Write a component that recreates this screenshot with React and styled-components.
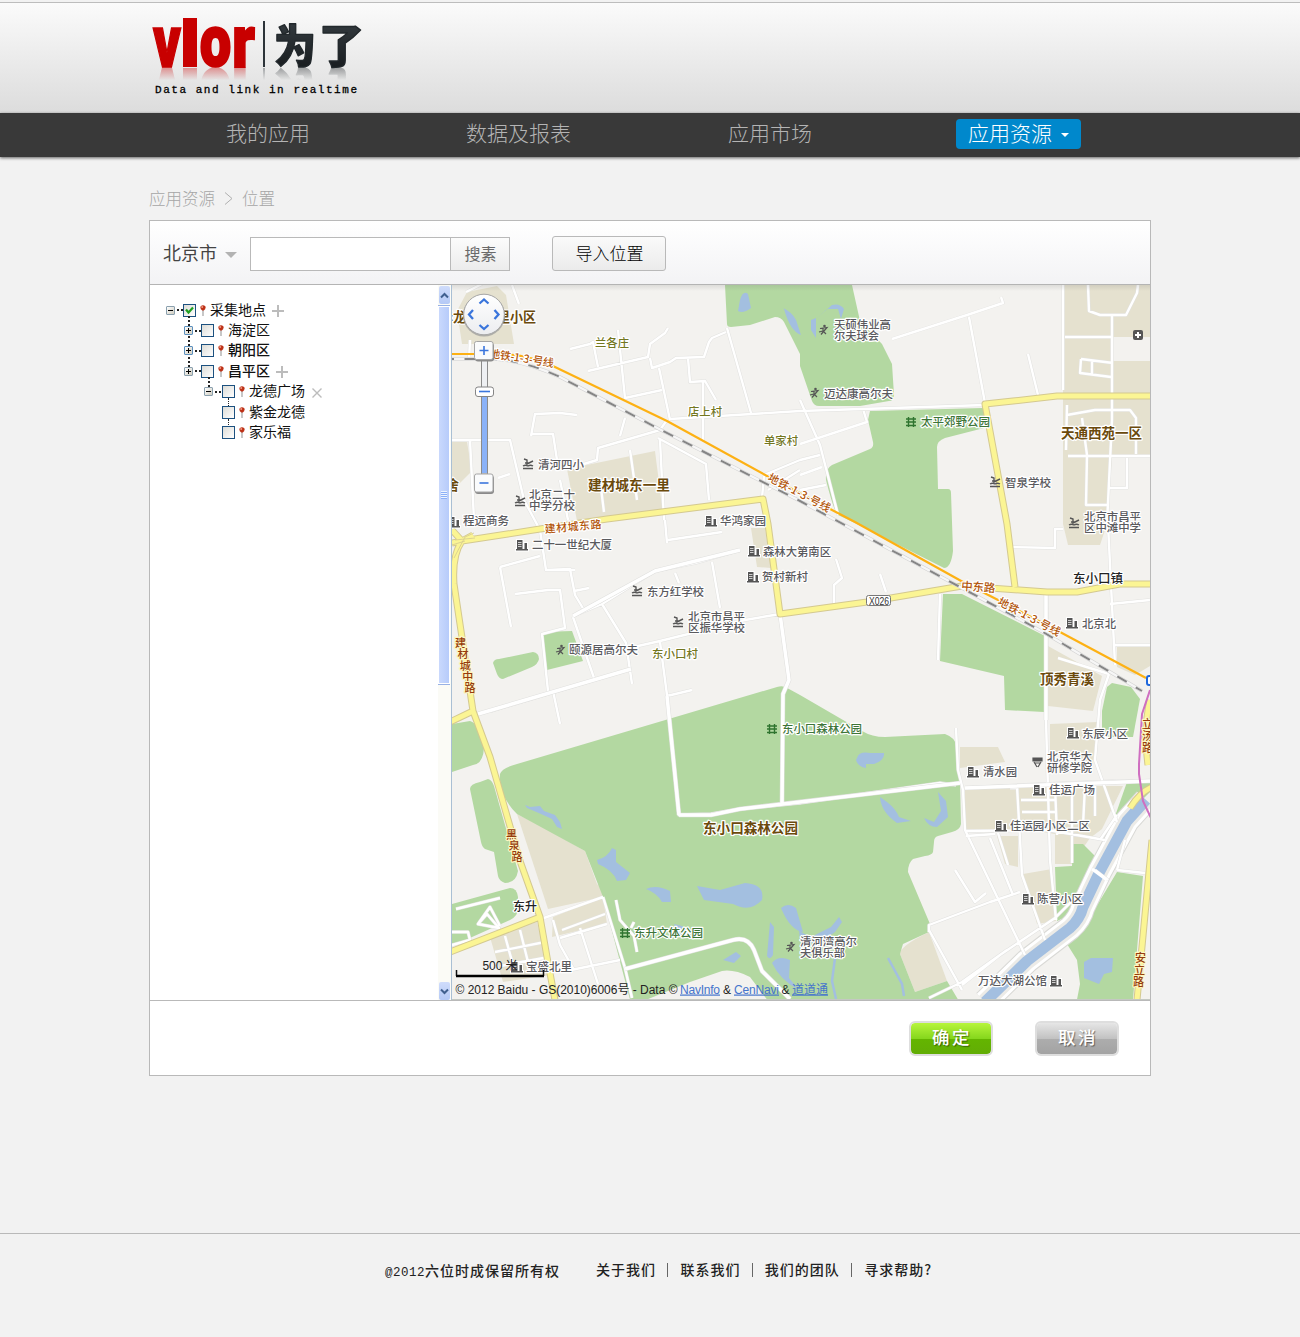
import React from 'react';
import styled, { createGlobalStyle } from 'styled-components';

const cjk = '"Noto Sans CJK SC", sans-serif';
const mono = '"Liberation Mono", "Noto Sans CJK SC", monospace';

const Global = createGlobalStyle`
  * { box-sizing: border-box; }
  body { margin: 0; background: #f2f2f2; font-family: ${cjk}; color: #222; }
`;

const Page = styled.div`
  width: 1300px;
  height: 1337px;
  display: flex;
  flex-direction: column;
  background: #f2f2f2;
  overflow: hidden;
`;
const Header = styled.header`
  height: 113px;
  flex: none;
  border-top: 2px solid #f2f2f2;
  background: linear-gradient(#fbfbfb, #dcdcdc);
  box-shadow: inset 0 1px 0 #bdbdbd;
  padding: 16px 149px 0;
`;
const Mark = styled.svg`
  display: block;
  overflow: visible;
  -webkit-box-reflect: below -1px linear-gradient(transparent 74%, rgba(0, 0, 0, 0.4));
`;
const Tagline = styled.p`
  margin: 15px 0 0 6px;
  font: 400 11px/14px ${mono};
  letter-spacing: 1.54px;
  color: #000;
  -webkit-text-stroke: 0.3px #000;
`;
const Nav = styled.nav`
  height: 44px;
  flex: none;
  background: #393939;
  box-shadow: 0 1px 3px rgba(0, 0, 0, 0.6);
  padding: 6px 0 0 226px;
  display: grid;
  grid-template-columns: 240px 262px 228px 125px;
  align-items: start;
`;
const NavItem = styled.a`
  font-size: 21px;
  line-height: 27px;
  height: 30px;
  font-weight: 300;
  white-space: nowrap;
  display: flex;
  align-items: center;
  color: ${(p) => (p.$active ? '#fff' : '#b4b4b4')};
  background: ${(p) => (p.$active ? '#0088cc' : 'transparent')};
  border-radius: 4px;
  padding: 0 0 3px ${(p) => (p.$active ? 12 : 0)}px;
`;
const Caret = styled.i`
  border: ${(p) => p.$size}px solid transparent;
  border-top-color: ${(p) => p.$color};
  border-bottom: 0;
  margin: ${(p) => p.$margin};
`;
const Crumbs = styled.div`
  height: 63px;
  flex: none;
  padding: 28px 0 0 149px;
  display: flex;
  gap: 9px;
  font-size: 16.5px;
  line-height: 26px;
  font-weight: 300;
  color: #a6a6a6;
  svg { margin-top: 7px; }
`;
const Panel = styled.main`
  width: 1002px;
  height: 856px;
  flex: none;
  margin-left: 149px;
  border: 1px solid #b9b9b9;
  background: #fff;
  display: flex;
  flex-direction: column;
`;
const Toolbar = styled.div`
  height: 64px;
  flex: none;
  border-bottom: 1px solid #b4b4b4;
  background: linear-gradient(#fff, #f3f3f5);
  display: flex;
  align-items: flex-start;
  padding: 15px 0 0 13px;
`;
const City = styled.div`
  width: 87px;
  height: 34px;
  padding-bottom: 2px;
  display: flex;
  align-items: center;
  font-size: 18px;
  color: #444;
`;
const SearchInput = styled.input`
  width: 201px;
  height: 34px;
  margin-top: 1px;
  border: 1px solid #b9b9b9;
  background: #fff;
  outline: 0;
`;
const SearchButton = styled.button`
  width: 59px;
  height: 34px;
  margin-top: 1px;
  padding: 0 0 3px 1px;
  border: 1px solid #b9b9b9;
  border-left: 0;
  background: linear-gradient(#fcfcfc, #ececec);
  font: 400 16px/28px ${cjk};
  color: #6a6a6a;
`;
const ImportButton = styled.button`
  width: 114px;
  height: 35px;
  margin-left: 42px;
  padding: 0 0 2px 1px;
  border: 1px solid #b9b9b9;
  border-radius: 3px;
  background: linear-gradient(#fafafa, #ebebeb);
  font: 300 17px/28px ${cjk};
  color: #000;
`;
const Body = styled.div`
  height: 716px;
  flex: none;
  display: flex;
  border-bottom: 1px solid #b9b9b9;
`;
const Tree = styled.ul`
  width: 288px;
  margin: 0;
  padding: 15px 0 0 16px;
  list-style: none;
`;
const Row = styled.li`
  height: 20.4px;
  display: flex;
  align-items: center;
  padding-left: ${(p) => p.$indent}px;
  font-size: 14px;
  font-weight: ${(p) => (p.$strong ? 500 : 400)};
  line-height: 20px;
  color: #111;
`;
const Name = styled.span`
  padding-bottom: 3px;
`;
const Toggle = styled.span`
  width: 9px;
  height: 9px;
  flex: none;
  border: 1px solid ${(p) => (p.$blue ? '#5b8fbd' : '#8aa0ae')};
  border-radius: 1px;
  background: linear-gradient(#000, #000) center / 5px 1px no-repeat,
    ${(p) => (p.$open ? '' : 'linear-gradient(#000, #000) center / 1px 5px no-repeat,')}
    linear-gradient(135deg, #fff, #cfccc0);
`;
const Dots = styled.span`
  width: ${(p) => p.$w}px;
  height: 2px;
  flex: none;
  background: repeating-linear-gradient(90deg, transparent 0 2px, #222 2px 4px);
`;
const Check = styled.span`
  position: relative;
  width: 13px;
  height: 13px;
  flex: none;
  border: 1px solid #1c5180;
  background: linear-gradient(135deg, #dcdcd7, #fff);
  svg { display: block; }
  &::after {
    content: '';
    display: ${(p) => (p.$line ? 'block' : 'none')};
    position: absolute;
    left: 5px;
    top: 12px;
    height: ${(p) => p.$line}px;
    border-left: 1px dotted #222;
  }
`;
const Pin = styled.svg`
  margin: 0 4px 0 4px;
  flex: none;
`;
const Action = styled.svg`
  margin: 2px 0 0 6px;
`;
const Scrollbar = styled.div`
  width: 14px;
  border-right: 1px solid #a9bfd4;
  background: #fbfbf6;
  display: flex;
  flex-direction: column;
  align-items: center;
  padding: 1px 1px 0 0;
`;
const ScrollEnd = styled.div`
  width: 11px;
  height: 18px;
  border-radius: 2px;
  background: linear-gradient(#cfdcfb, #b4c9f6);
  display: flex;
  align-items: center;
  justify-content: center;
  svg { transform: ${(p) => (p.$down ? 'rotate(180deg)' : 'none')}; }
`;
const Thumb = styled.div`
  width: 12px;
  height: 380px;
  margin: 1px 0 auto;
  border: 1px solid #98b1e4;
  border-width: 1px 0;
  box-shadow: inset 0 0 0 1px #fff;
  background: linear-gradient(90deg, #cbdafd, #b5cafa);
  display: flex;
  align-items: center;
  justify-content: center;
`;
const Grip = styled.i`
  width: 6px;
  height: 8px;
  background: repeating-linear-gradient(#eef4fe 0 1px, #8cb0f8 1px 2px);
`;
const MapView = styled.svg`
  display: block;
  width: 698px;
  height: 715px;
  font-family: ${cjk};
`;
const Actions = styled.div`
  flex: 1;
  display: flex;
  justify-content: flex-end;
  gap: 42px;
  padding: 20px 31px 0 0;
`;
const Button = styled.button`
  width: 84px;
  height: 35px;
  padding: 0 0 4px 2px;
  border: 2px solid #dedede;
  border-radius: 6px;
  font: 500 17.5px/27px ${cjk};
  letter-spacing: 2.5px;
  color: #fff;
  text-shadow: 1px 1px 1px rgba(0, 0, 0, 0.45);
  background: padding-box ${(p) =>
    p.$primary
      ? 'linear-gradient(#b7f53c, #86d71d 50%, #64b500 51%, #62ad05)'
      : 'linear-gradient(#e6e6e6, #c2c2c2 50%, #adadad 51%, #a3a3a3)'};
`;
const Footer = styled.footer`
  margin-top: 157px;
  height: 104px;
  border-top: 1px solid #b9b9b9;
  display: flex;
  align-items: flex-start;
  padding: 25px 0 0 385px;
  font: 500 14px/20px ${cjk};
  letter-spacing: 1px;
  color: #222;
`;
const Copyright = styled.span`
  width: 211px;
  margin-top: 1px;
  white-space: nowrap;
`;
const Year = styled.span`
  font-family: ${mono};
  font-size: 12.5px;
  letter-spacing: 0.5px;
`;
const FooterLink = styled.a`
  & + &::before {
    content: '';
    display: inline-block;
    height: 14px;
    border-left: 1px solid #666;
    margin: 0 12px 0 11.4px;
    vertical-align: -2px;
  }
`;

function Logo() {
  return (
    <Mark width="230" height="50" viewBox="149 18 230 50">
      <defs>
        <linearGradient id="ink" x1="0" y1="0" x2="0" y2="1">
          <stop offset="0" stopColor="#3a4146" />
          <stop offset="1" stopColor="#14181b" />
        </linearGradient>
      </defs>
      <g fill="#c80000" stroke="#c80000" fontFamily="Roboto, sans-serif" fontWeight="900">
        <text x="153" y="66.5" fontSize="75" strokeWidth="1.6" textLength="28" lengthAdjust="spacingAndGlyphs">v</text>
        <rect x="183.500" y="18.500" width="13" height="48" />
        <text x="200" y="66" fontSize="72" strokeWidth="2.6" textLength="31" lengthAdjust="spacingAndGlyphs">o</text>
        <text x="232" y="66.500" fontSize="74" strokeWidth="1.8" textLength="23" lengthAdjust="spacingAndGlyphs">r</text>
      </g>
      <rect x="263" y="21" width="2" height="46" fill="#2d3439" />
      <g fill="url(#ink)" stroke="#22282c" strokeWidth="1.4" strokeLinejoin="round" fontFamily="Noto Sans CJK SC, sans-serif" fontWeight="900" fontSize="45">
        <text x="274" y="62.500" textLength="42" lengthAdjust="spacingAndGlyphs">为</text>
        <text x="319" y="62.500" textLength="45" lengthAdjust="spacingAndGlyphs">了</text>
      </g>
    </Mark>
  );
}

const parks = [
  'M725 285L727 324Q727 327 731 327L750 325L775 317Q781 317 784 322L800 354V366L812 401Q814 406 819 406H860L889 401Q894 401 894 395L892 364L882 344L860 321L852 285Z',
  'M870 411L983 408L988 427L945 438Q937 441 937 447L938 489H948Q951 489 951 493L953 551Q951 568 944 568L857 524L838 515Q834 512 826 480Q825 469 832 465L870 449Q874 447 873 442L868 420Z',
  'M943 594H962L1045 636L1044 712L1005 710L1004 676L940 661Z',
  'M1112 683L1131 687L1140 699L1133 737H1102V711L1107 687Z',
  'M542 632L572 631L583 661L547 670Z',
  'M493 663Q494 659 499 659L533 652Q539 653 539 659Q538 664 532 667L503 679Q499 679 497 674Z',
  'M517 764L777 687Q784 685 789 689L800 695L862 731Q872 737 885 737L945 734Q956 738 956 746L960 781L961 824Q960 830 952 832L938 836Q934 837 934 842L933 852Q932 855 925 856L913 859Q908 863 908 872L930 924L929 932L903 944L900 954L915 992L947 981L958 999.500H630L603 897L585 851L517 814Q498 795 500 774Q502 768 517 764Z',
  'M452 724L470 721Q475 722 478 730L484 748Q483 764 473 765L452 772Z',
  'M470 789Q470 784 480 782L488 779Q492 780 494 786L518 871Q516 883 505 883Q499 881 498 876L494 852L485 849Q482 847 481 842Z',
  'M452 904L510 888Q517 888 518 897V909Q518 916 510 920L452 946Z',
  'M1073 844H1083L1095 856V867L1073 914L1057 921L1055 867L1072 866Z',
  'M1117 872L1143 876L1133 999.500H1077L1080 984L1077 960L1067 944L1090 917Z',
  'M1150 782H1127L1113 822L1122 820L1150 792Z',
];
const blocks = [
  'M467 292L497 286L506 295L514 344H462L457 311Z',
  'M567 469L655 451L663 514L577 521Z',
  'M452 442H467L472 471L452 491Z',
  'M1063 285H1150V337H1113V361H1150V456H1112L1107 524L1100 545H1068L1063 524Z',
  'M751 528H765L771 568L757 567Z',
  'M1048 646L1102 676L1093 711L1048 706Z',
  'M1117 647H1150V666L1135 675L1117 667Z',
  'M1050 724L1097 722L1093 764L1050 750Z',
  'M960 747H998L1005 762L960 768Z',
  'M965 787H1017V829L965 830Z',
  'M1019 786H1123L1102 829L1090 838L1072 864H1055V834L1019 828Z',
  'M997 836H1018V867L1005 864Z',
  'M1023 874L1052 869L1056 921L1037 924Z',
  'M929 932L947 981L915 992L900 954Q900 946 929 932Z',
  'M517 814L543 827L585 851L597 884L603 889V897L548 909Z',
  'M553 917L603 897L607 924L577 931L552 937Z',
  'M490 937L537 922L551 975L503 982Z',
];
const waters = [
  'M740 300Q743 290 748 294L751 308Q743 314 738 311Z',
  'M783 308Q792 312 796 320L801 335Q790 331 784 309Z',
  'M817 318L832 305Q840 303 844 309L841 319L838 309L827 309Z',
  'M811 320L816 318L816 338L811 330Z',
  'M525 805L530 807L540 806L544 811L555 815L560 822L562 829L557 827L552 819L541 814L527 808Z',
  'M597 860Q608 857 612 848L616 850L616 862L630 873L626 880L617 881Q613 870 598 864Z',
  'M646 889Q656 884 670 891L671 902L662 902Q657 893 646 889Z',
  'M697 886L720 890L745 883Q765 884 762 900Q750 913 733 904L704 900Z',
  'M781 908Q788 902 796 908L803 932Q790 930 781 908Z',
  'M770 922L774 927L773 955Q770 961 767 956Z',
  'M723 960L736 952L741 956L734 963Z',
  'M674 924L682 926L693 934L680 936Z',
  'M772 963Q778 955 790 960L789 978L799 990Q780 980 772 963Z',
  'M799 930Q811 940 815 935L831 927L839 917L842 922L835 932L818 944L800 940Z',
  'M857 758Q859 751 870 753L884 753Q885 760 874 764H866V768Q858 767 856 760Z',
  'M880 797L887 802Q896 809 899 817L911 821L897 823Q881 812 880 797Z',
  'M924 818L934 822L941 811L938 792L946 801L948 817L937 827Q928 827 924 818Z',
  'M1084 962L1091 958L1113 958L1112 972L1104 974L1099 984L1084 978Z',
];
const streams = 'M835 958L832 981L836 999M888 958L902 984L904 996';
const thin =
  'M466 292L482 284M469 360L470 340M512 285L519 304M570 349L590 344L593 342L598 367M588 371L648 357L650 344L665 333L668 328M618 330L625 398L662 390M650 358L652 368L670 362L676 358L704 357L709 342L712 338L726 332M659 368L670 420M688 358L690 382L705 381L716 400M727 328L751 413M670 419L800 411L985 405M703 382V440M452 440L510 440L524 500L540 530L546 570L570 569L575 595L584 610M531 436L535 414L560 413L577 415M531 434L553 434L557 460M620 436L625 418M567 469L597 460L598 448L660 430L667 420M658 438L706 464L709 500M560 480L568 520M660 440L664 520M600 480L604 512M600 487L632 481M630 450L637 500M470 440L474 520M498 478L510 474M764 476L762 498M764 475L800 460M768 490L800 470M800 400L820 445L838 515M800 444L867 422L863 409M800 460L820 455M800 475L822 467M800 490L826 485M892 339L967 315L1003 303L1001 297M969 317L985 403M1028 354L1038 395M1063 285V390M1065 337H1113M1088 285L1089 311L1100 315H1126L1137 293L1138 285M1112 315V420L1107 524M1081 359L1113 363M1092 361V375M1081 359L1080 373L1111 377M1066 450L1067 405M1068 456H1150M1067 415L1095 410H1130L1136 418V454M1082 418L1087 455L1086 505H1107M1127 458V488H1109M500 567L540 556M500 567L511 627M515 594L548 590L560 590L565 628L542 634L548 691M575 570L548 570M574 591L589 588M573 616L602 604L655 571L695 563L740 550M573 617L594 678M602 604L626 643L632 684M636 654L638 646L660 641L745 620L780 614M675 573L679 583M712 562L720 608M668 540L722 532M665 520L667 543M491 711L631 669M553 691L560 724M660 642L667 695L679 815L711 814L740 809L800 803L940 783L956 785M667 696L692 690M780 614L789 680L783 694L782 804M836 559L842 578L834 585V604M880 574L886 592M940 594L938 660M956 728L958 770L963 790L965 830L1025 955M965 788L1020 785L1117 781H1150M1047 592L1046 720L1050 860L1056 920M1012 547L1055 548V529H1063M1108 524L1115 665M1115 645H1150M1110 604L1150 600M1058 658L1109 674M1109 674L1100 700L1095 760L1117 822M1017 786L1022 875L1045 940M965 831L1048 830L1105 840M998 833L1008 865M955 870L975 902L986 893M990 838L1013 895M966 836L995 834M929 932V925L990 902L1020 892M929 930L962 990M929 998L962 982L1007 950M962 985L1000 955L1055 918L1073 900M1017 788H1010M1021 800H1055M1022 812H1055M1055 786L1057 835M1072 787V863M1085 786L1083 825M1095 786V816M1100 840L1117 815M1095 870L1108 880M1117 870L1145 873M1125 840L1117 870M603 897L625 968L632 998M616 900L620 920L634 936L637 952M631 928L634 922M544 918L603 897M553 920L560 945L574 970M562 930L605 914M560 938L607 924M571 970L620 960M580 928L598 984M505 936L513 965M520 930L530 970M495 952L545 942M500 966L549 957M456 909L500 898M478 924L487 914L499 928L478 924L490 907L500 926M452 932L468 932L470 940L452 945';
const mainRoads =
  'M679 815H711L740 809L960 783M667 696L679 815M782 804L783 694L789 680L780 614M573 616L655 571L740 550M478 714L631 669M965 788L1150 781M1046 592L1046 720M625 969L733 940Q748 936 754 950L762 971L790 999';
const fatRoads =
  'M452 543L462 541L473 535M462 541Q452 555 454 584L473 711L490 757L520 861L540 917L547 957L555 1000M452 530L462 541L540 529L607 519L763 499L768 524L780 614L867 602L962 586L1047 592L1077 592L1120 584H1152M1152 396H1057L1013 401L985 404L1007 524L1015 587M450 722L473 711M450 952L540 917M1150 700Q1143 730 1148 765M1152 787Q1140 792 1130 808M1152 840L1137 1000';
const metro = 'M452 354H500Q530 355 555 367L667 421L767 476L855 522L963 582L1060 632L1146 678';
const rail = 'M452 359H495Q525 361 560 377L663 431L800 501L960 587L1043 632L1142 691';
const canal = 'M985 1002L1027 961L1070 928Q1080 919 1083 907L1100 871L1127 821L1146 800';

// [text, x, baseline, width, kind]
const labels = [
  ['华龙', 440, 322, 26, 'area'], ['里小区', 497, 322, 39, 'area'],
  ['兰各庄', 595, 347, 34, 'village'], ['店上村', 688, 416, 34, 'village'], ['单家村', 764, 445, 34, 'village'],
  ['天硕伟业高', 834, 329, 57, 'poi'], ['尔夫球会', 834, 340, 45, 'poi'],
  ['迈达康高尔夫', 824, 398, 69, 'poi'], ['太平郊野公园', 921, 426, 69, 'park'],
  ['天通西苑一区', 1061, 438, 81, 'area'], ['智泉学校', 1005, 487, 46, 'poi'],
  ['北京市昌平', 1084, 521, 57, 'poi'], ['区中滩中学', 1084, 532, 57, 'poi'],
  ['清河四小', 538, 469, 46, 'poi'], ['建材城东一里', 588, 490, 82, 'area'],
  ['北京二十', 529, 499, 46, 'poi'], ['中学分校', 529, 510, 46, 'poi'],
  ['程远商务', 463, 525, 46, 'poi'], ['华鸿家园', 720, 525, 46, 'poi'],
  ['二十一世纪大厦', 532, 549, 80, 'poi'], ['森林大第南区', 763, 556, 68, 'poi'],
  ['贺村新村', 762, 581, 46, 'poi'], ['东方红学校', 647, 596, 57, 'poi'],
  ['北京市昌平', 688, 621, 57, 'poi'], ['区振华学校', 688, 632, 57, 'poi'],
  ['颐源居高尔夫', 569, 654, 69, 'poi'], ['东小口村', 652, 658, 46, 'village'],
  ['东小口镇', 1073, 583, 50, 'town'], ['北京北', 1082, 628, 34, 'poi'], ['顶秀青溪', 1040, 684, 54, 'area'],
  ['东小口森林公园', 782, 733, 80, 'park'], ['东辰小区', 1082, 738, 46, 'poi'],
  ['北京华大', 1047, 761, 45, 'poi'], ['研修学院', 1047, 772, 45, 'poi'],
  ['清水园', 983, 776, 34, 'poi'], ['佳运广场', 1049, 794, 46, 'poi'], ['佳运园小区二区', 1010, 830, 80, 'poi'],
  ['东小口森林公园', 703, 833, 95, 'area'], ['陈营小区', 1037, 903, 46, 'poi'],
  ['东升', 513, 911, 24, 'town'], ['东升文体公园', 634, 937, 69, 'park'],
  ['清河湾高尔', 800, 946, 57, 'poi'], ['夫俱乐部', 800, 957, 45, 'poi'],
  ['万达大湖公馆', 978, 985, 69, 'poi'], ['宝盛北里', 526, 971, 46, 'poi'], ['舍', 447, 490, 12, 'area'],
];
const kinds = {
  area: ['#6b4a0c', 13.5, 700],
  village: ['#73771f', 11.5, 500],
  poi: ['#5a5a5e', 11.5, 500],
  park: ['#3d7538', 11.5, 500],
  town: ['#222', 12.5, 500],
};
const buildings = [[711, 521], [522, 545], [454, 522], [754, 551], [753, 577], [1072, 623], [1073, 733], [973, 772], [1039, 790], [1001, 826], [1028, 899], [1056, 981], [517, 967]];
const schools = [[528, 464], [520, 501], [637, 591], [678, 622], [995, 482], [1074, 523]];
const golfs = [[823, 330], [814, 393], [560, 650], [790, 947]];
const gardens = [[911, 422], [772, 729], [625, 933]];

const halo = { stroke: '#fff', strokeWidth: 2.4, strokeLinejoin: 'round', paintOrder: 'stroke' };

function Stacked({ text, x, y, dx = 0, step = 11 }) {
  return [...text].map((c, i) => (
    <text key={i} x={x + i * dx} y={y + i * step} fontSize="11" fontWeight="500" fill="#963c0c" {...halo} stroke="#fdf6c0">{c}</text>
  ));
}

function RoadName({ text, x, y, angle, width, size = 11 }) {
  return (
    <text transform={`translate(${x} ${y}) rotate(${angle})`} fontSize={size} fontWeight="500" fill="#b3570c" textLength={width} {...halo}>
      {text}
    </text>
  );
}

function ZoomButton({ y, plus }) {
  return (
    <g>
      <rect x="475" y={y + 1} width="19" height="18.500" rx="3" fill="#8a8a8a" />
      <rect x="474.500" y={y - 0.5} width="18.500" height="18" rx="2" fill="#fafbfc" stroke="#a5a5a5" />
      <path d={plus ? `M479.500 ${y + 8.5}h9M484 ${y + 4}v9` : `M479.500 ${y + 8.5}h9`} stroke="#3a75dc" strokeWidth="1.600" />
    </g>
  );
}

function CityMap() {
  return (
    <MapView viewBox="452 285 698 715">
      <defs>
        <linearGradient id="dial" x1="0" y1="0" x2="0" y2="1">
          <stop offset="0" stopColor="#fff" />
          <stop offset="1" stopColor="#ecedf0" />
        </linearGradient>
        <linearGradient id="edge" x1="0" y1="0" x2="0" y2="1">
          <stop offset="0" stopColor="#777" stopOpacity=".18" />
          <stop offset="1" stopColor="#777" stopOpacity="0" />
        </linearGradient>
      </defs>
      <rect x="452" y="285" width="698" height="714" fill="#f3f2ef" />
      {blocks.map((d) => <path key={d} d={d} fill="#e5e1cf" />)}
      {parks.map((d) => <path key={d} d={d} fill="#b3d8a1" />)}
      <path d="M647 999.500L690 982L722 971Q734 969 750 977L767 999.500Z" fill="#f3f2ef" />
      {waters.map((d) => <path key={d} d={d} fill="#a3bfe0" />)}
      <path d={streams} fill="none" stroke="#a3bfe0" strokeWidth="2.500" />
      <g fill="none" strokeLinejoin="round">
        <path d={canal} stroke="#d9d9d6" strokeWidth="25" />
        <path d={canal} stroke="#fff" strokeWidth="23" />
        <path d={canal} stroke="#ecebe7" strokeWidth="17" />
        <path d={canal} stroke="#a3bfe0" strokeWidth="11" />
        <path d={thin} stroke="#e2e2e0" strokeWidth="3.400" />
        <path d={thin} stroke="#fff" strokeWidth="2.400" />
        <path d={mainRoads} stroke="#e0e0de" strokeWidth="4.600" />
        <path d={mainRoads} stroke="#fff" strokeWidth="3.500" />
        <path d="M1092 869L1107 880" stroke="#fff" strokeWidth="3" />
        <path d={fatRoads} stroke="#d4c990" strokeWidth="7" />
        <path d={fatRoads} stroke="#fbf594" strokeWidth="5" />
        <path d="M452 545L465 541M454 558L465 537L474 533M455 540L475 538" stroke="#d4c990" strokeWidth=".8" />
        <path d={rail} stroke="#d0d0d0" strokeWidth="3.400" />
        <path d={rail} stroke="#f6f6f6" strokeWidth="2.400" />
        <path d={rail} stroke="#858585" strokeWidth="2" strokeDasharray="11 10.500" strokeDashoffset="9" />
        <path d={metro} stroke="#fdb114" strokeWidth="2.200" />
        <path d="M1150 690L1142 714L1139 764V774L1143 801L1151 818" stroke="#cf6fc0" strokeWidth="2" />
      </g>

      {labels.map(([text, x, y, w, kind]) => {
        const [fill, size, weight] = kinds[kind];
        return (
          <text key={text + x + y} x={x} y={y} fontSize={size} fontWeight={weight} fill={fill} textLength={w} lengthAdjust="spacingAndGlyphs" {...halo}>
            {text}
          </text>
        );
      })}
      <RoadName text="地铁-1-3-号线" x={489} y={357} angle={9} width={65} />
      <RoadName text="地铁-1-3-号线" x={767} y={480} angle={28} width={69} />
      <RoadName text="地铁-1-3-号线" x={997} y={604} angle={28} width={69} />
      <RoadName text="建材城东路" x={545} y={533} angle={-5} width={57} />
      <RoadName text="中东路" x={961} y={590} angle={4} width={34} size={11.5} />
      <Stacked text="建材城中路" x={455} y={647} dx={2.4} step={11.3} />
      <Stacked text="黑泉路" x={506} y={839} dx={2.7} />
      <Stacked text="立汤路" x={1142} y={728} dx={0} step={12} />
      <Stacked text="安立路" x={1135} y={962} dx={-1} step={12} />

      {buildings.map(([x, y]) => (
        <g key={x + '-' + y} stroke="#fff" strokeWidth="2" paintOrder="stroke">
          <path d={`M${x - 5} ${y + 5}v-10h5.500v10ZM${x - 6} ${y + 4}h12v1.400h-12ZM${x + 2.500} ${y - 2}h2.500v7h-2.500Z`} fill="#555" />
          <path d={`M${x - 4} ${y - 2.500}h3.500M${x - 4} ${y - .5}h3.500M${x - 4} ${y + 1.500}h3.500`} stroke="#ddd" strokeWidth=".9" />
        </g>
      ))}
      {schools.map(([x, y]) => (
        <g key={x + '-' + y} fill="none" stroke="#555" strokeWidth="1.400">
          <path d={`M${x - 5} ${y + 2}q2.500 -1.500 5 0q2.500 -1.500 5 0M${x - 5} ${y + 4.5}h10M${x - 4} ${y - 5}l3 1v4l6 -3M${x - 3} ${y - 1}l4 0`} />
        </g>
      ))}
      {golfs.map(([x, y]) => (
        <g key={x + '-' + y} fill="none" stroke="#555" strokeWidth="1.200">
          <path d={`M${x - 3} ${y - 1.500}l7 -1l-6 7M${x} ${y - 2}l0 3l3 3M${x - 4} ${y + 2}l4 -1`} />
          <circle cx={x + 1.500} cy={y - 4} r=".7" />
        </g>
      ))}
      {gardens.map(([x, y]) => (
        <path key={x} d={`M${x - 2.5} ${y - 5}v10M${x + 2.5} ${y - 5}v10M${x - 5} ${y - 3}h10M${x - 5} ${y}h10M${x - 5} ${y + 3.5}h10`} stroke="#2f742f" strokeWidth="1.400" />
      ))}
      <path d="M1033 758h9v3h-9zM1034 762l3 5M1041 762l-3 5M1035 763h5" fill="#555" stroke="#555" strokeWidth="1.200" />
      <rect x="1133" y="330" width="10" height="10" rx="2" fill="#555" />
      <path d="M1138 332v6M1135 335h6" stroke="#fff" strokeWidth="2" />
      <rect x="866.500" y="595.500" width="24" height="10" rx="2" fill="#fff" stroke="#777" />
      <text x="869" y="604.500" fontSize="10" fill="#333" textLength="20" lengthAdjust="spacingAndGlyphs" fontFamily="Liberation Sans, sans-serif">X026</text>
      <path d="M1152 676h-3q-2 0 -2 2v5q0 2 2 2h3" fill="#fff" stroke="#2068dc" strokeWidth="2" />

      <circle cx="484" cy="315.500" r="21" fill="#999" opacity=".7" />
      <circle cx="484" cy="314.500" r="20.300" fill="url(#dial)" stroke="#a7a7a7" />
      <path d="M479.500 303.500l4.500 -4l4.500 4M479.500 325l4.500 4l4.500 -4M473 310l-4 4.500l4 4.500M494.500 310l4 4.500l-4 4.500" fill="none" stroke="#3a75dc" strokeWidth="2.300" />
      <rect x="481.500" y="359" width="6" height="115" fill="#eef0f3" stroke="#8b8b8b" />
      <rect x="482" y="397" width="5" height="76" fill="#8ab2f8" />
      <ZoomButton y={342} plus />
      <ZoomButton y={474.5} />
      <rect x="475.500" y="387" width="18" height="9.500" rx="2.500" fill="#fff" stroke="#858585" />
      <path d="M479 391.500h11" stroke="#3a75dc" strokeWidth="1.600" />

      <path d="M456.500 970v6M543.500 970v6" stroke="#111" strokeWidth="1.500" />
      <path d="M456 976h88" stroke="#000" strokeWidth="2.500" />
      <g fontSize="12" fill="#222" fontFamily="Liberation Sans, Noto Sans CJK SC, sans-serif">
        <text x="482.500" y="969.500" textLength="35">500 米</text>
        <text x="455.500" y="993.500" textLength="222" lengthAdjust="spacingAndGlyphs">© 2012 Baidu - GS(2010)6006号 - Data ©</text>
        <text x="723" y="993.500">&amp;</text>
        <text x="781.500" y="993.500">&amp;</text>
        <g fill="#4574cc" textDecoration="underline">
          <text x="680" y="993.500" textLength="40">NavInfo</text>
          <text x="734" y="993.500" textLength="45">CenNavi</text>
          <text x="792" y="993.500" textLength="36">道道通</text>
        </g>
      </g>
      <rect x="452" y="285" width="698" height="6" fill="url(#edge)" />
      <rect x="452" y="999" width="698" height="1" fill="#c4c8c2" />
    </MapView>
  );
}

function PinIcon() {
  return (
    <Pin width="6" height="11" viewBox="0 0 6 11">
      <path d="M3 5v6" stroke="#a9a9a9" strokeWidth="1.300" />
      <path d="M.5 1.500Q3 -1 5.500 1.500Q6 4 3.800 5.500H2.200Q0 4 .5 1.500Z" fill="#bd3117" />
      <circle cx="2.200" cy="2" r="1" fill="#ef9b84" />
    </Pin>
  );
}

const rows = [
  { name: '采集地点', indent: 0, toggle: 'open', checked: true, action: 'add' },
  { name: '海淀区', indent: 18, toggle: 'closed', blue: true },
  { name: '朝阳区', indent: 18, toggle: 'closed', blue: true, strong: true },
  { name: '昌平区', indent: 18, toggle: 'closed', strong: true, action: 'add' },
  { name: '龙德广场', indent: 38, toggle: 'open', action: 'remove', line: 8 },
  { name: '紫金龙德', indent: 38, line: 8 },
  { name: '家乐福', indent: 38 },
];

const Branch = styled.span`
  position: relative;
  display: flex;
  &::before {
    content: '';
    display: ${(p) => (p.$show ? 'block' : 'none')};
    position: absolute;
    left: 4px;
    top: -12px;
    height: 12px;
    width: 2px;
    background: repeating-linear-gradient(transparent 0 2px, #222 2px 4px);
  }
`;

function TreeRow({ row }) {
  const dots = row.indent === 38 ? 9 : 8;
  return (
    <Row $indent={row.toggle ? row.indent : row.indent + 18} $strong={row.strong}>
      {row.toggle && (
        <>
          <Branch $show={row.indent > 0}>
            <Toggle $open={row.toggle === 'open'} $blue={row.blue} />
          </Branch>
          <Dots $w={dots} />
        </>
      )}
      <Check $line={row.line}>
        {row.checked && (
          <svg width="11" height="11" viewBox="0 0 11 11">
            <path d="M2 4.500L4.500 7.500L9 2.500" fill="none" stroke="#21a121" strokeWidth="2.200" />
          </svg>
        )}
      </Check>
      <PinIcon />
      <Name>{row.name}</Name>
      {row.action && (
        <Action width="12" height="12" viewBox="0 0 12 12">
          <path d={row.action === 'add' ? 'M0 6h12M6 0v12' : 'M1.500 1.500l9 9M10.500 1.500l-9 9'} stroke="#bcbcbc" strokeWidth={row.action === 'add' ? 2 : 1.4} />
        </Action>
      )}
    </Row>
  );
}

function Chevron() {
  return (
    <svg width="9" height="7" viewBox="0 0 9 7">
      <path d="M1 5.500L4.500 2L8 5.500" fill="none" stroke="#40608f" strokeWidth="2" />
    </svg>
  );
}

export default function App() {
  return (
    <Page>
      <Global />
      <Header>
        <Logo />
        <Tagline>Data and link in realtime</Tagline>
      </Header>
      <Nav>
        <NavItem>我的应用</NavItem>
        <NavItem>数据及报表</NavItem>
        <NavItem>应用市场</NavItem>
        <NavItem $active>应用资源<Caret $size={4} $color="#fff" $margin="4px 0 0 9px" /></NavItem>
      </Nav>
      <Crumbs>
        <span>应用资源</span>
        <svg width="9" height="13" viewBox="0 0 9 13"><path d="M1 .5L8 6.500L1 12.500" fill="none" stroke="#b0b0b0" /></svg>
        <span>位置</span>
      </Crumbs>
      <Panel>
        <Toolbar>
          <City>北京市<Caret $size={6} $color="#b3b3b3" $margin="6px 0 0 8px" /></City>
          <SearchInput />
          <SearchButton>搜素</SearchButton>
          <ImportButton>导入位置</ImportButton>
        </Toolbar>
        <Body>
          <Tree>{rows.map((row) => <TreeRow key={row.name} row={row} />)}</Tree>
          <Scrollbar>
            <ScrollEnd><Chevron /></ScrollEnd>
            <Thumb><Grip /></Thumb>
            <ScrollEnd $down><Chevron /></ScrollEnd>
          </Scrollbar>
          <CityMap />
        </Body>
        <Actions>
          <Button $primary>确定</Button>
          <Button>取消</Button>
        </Actions>
      </Panel>
      <Footer>
        <Copyright><Year>@2012</Year>六位时成保留所有权</Copyright>
        <FooterLink>关于我们</FooterLink>
        <FooterLink>联系我们</FooterLink>
        <FooterLink>我们的团队</FooterLink>
        <FooterLink>寻求帮助?</FooterLink>
      </Footer>
    </Page>
  );
}
